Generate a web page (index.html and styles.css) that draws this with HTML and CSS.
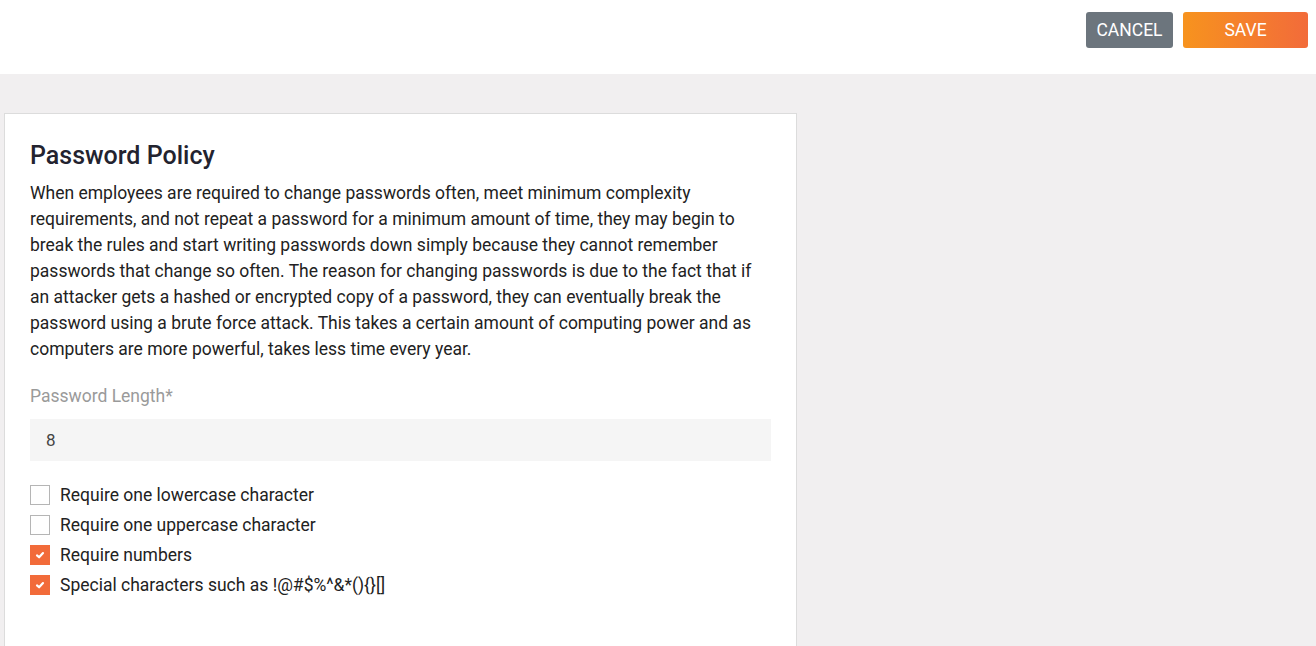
FILE: index.html
```html
<!DOCTYPE html>
<html>
<head>
<meta charset="utf-8">
<link rel="stylesheet" href="styles.css">
</head>
<body>
<header class="topbar">
  <button class="btn btn-cancel">CANCEL</button>
  <button class="btn btn-save">SAVE</button>
</header>
<main class="content">
  <section class="card">
    <h1 class="title">Password Policy</h1>
    <p class="desc">When employees are required to change passwords often, meet minimum complexity requirements, and not repeat a password for a minimum amount of time, they may begin to break the rules and start writing passwords down simply because they cannot remember passwords that change so often. The reason for changing passwords is due to the fact that if an attacker gets a hashed or encrypted copy of a password, they can eventually break the password using a brute force attack. This takes a certain amount of computing power and as computers are more powerful, takes less time every year.</p>
    <label class="field-label">Password Length*</label>
    <div class="input">8</div>
    <ul class="checks">
      <li class="check"><span class="box"></span>Require one lowercase character</li>
      <li class="check"><span class="box"></span>Require one uppercase character</li>
      <li class="check"><span class="box on"><svg width="12" height="12" viewBox="0 0 12 12"><path d="M3 6.4 L5.1 8.3 L9 4.1" fill="none" stroke="#fff" stroke-width="2.2" stroke-linecap="round" stroke-linejoin="round"/></svg></span>Require numbers</li>
      <li class="check"><span class="box on"><svg width="12" height="12" viewBox="0 0 12 12"><path d="M3 6.4 L5.1 8.3 L9 4.1" fill="none" stroke="#fff" stroke-width="2.2" stroke-linecap="round" stroke-linejoin="round"/></svg></span>Special characters such as !@#$%^&amp;*(){}[]</li>
    </ul>
  </section>
</main>
</body>
</html>
```
FILE: styles.css
```css
* { box-sizing: border-box; }
html, body { margin: 0; padding: 0; }
body {
  font-family: Roboto, "Liberation Sans", Arial, sans-serif;
  background: #f1eff0;
  color: #212529;
  height: 646px;
  overflow: hidden;
}
.topbar {
  height: 74px;
  background: #fff;
  display: flex;
  justify-content: flex-end;
  align-items: flex-start;
  padding: 12px 8px 0 0;
  gap: 10px;
}
.btn {
  height: 36px;
  border: none;
  border-radius: 3px;
  color: #fff;
  font-family: Roboto, "Liberation Sans", Arial, sans-serif;
  font-size: 17.5px;
  padding: 0;
  cursor: pointer;
}
.btn-cancel {
  width: 87px;
  background: #6c757d;
}
.btn-save {
  width: 125px;
  background: linear-gradient(to right, #f7931e, #f26b3a);
}
.content {
  padding: 39px 0 0 4px;
}
.card {
  width: 793px;
  height: 533px;
  background: #fff;
  border: 1px solid #dcdcdc;
  border-bottom: none;
  padding: 27px 25px 0 25px;
}
.title {
  margin: 0;
  font-size: 25px;
  line-height: 30px;
  font-weight: 500;
  color: #23232f;
}
.desc {
  margin: 9px 0 0 0;
  font-size: 17.5px;
  line-height: 26px;
  color: #222;
}
.field-label {
  display: block;
  margin-top: 22px;
  font-size: 17.5px;
  line-height: 24px;
  color: #9a9a9a;
}
.input {
  margin-top: 11px;
  height: 42px;
  background: #f5f5f5;
  padding-left: 16px;
  font-size: 17px;
  line-height: 42px;
  color: #444;
}
.checks {
  list-style: none;
  margin: 19px 0 0 0;
  padding: 0;
}
.check {
  display: flex;
  align-items: center;
  height: 30px;
  font-size: 17.5px;
  color: #222;
}
.box {
  width: 20px;
  height: 20px;
  border: 1px solid #b5b5b5;
  background: #fff;
  margin-right: 10px;
  display: flex;
  align-items: center;
  justify-content: center;
  flex: none;
}
.box.on {
  background: #f26b3a;
  border-color: #f26b3a;
}
```
